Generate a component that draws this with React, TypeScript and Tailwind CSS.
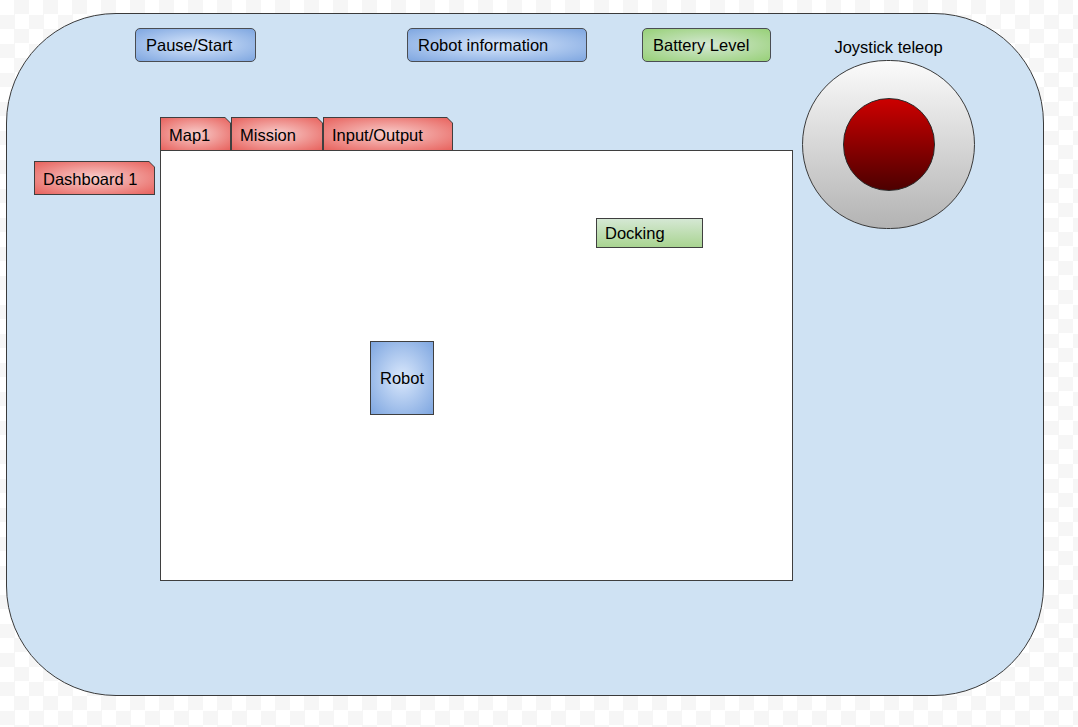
const font = { fontFamily: '"Liberation Sans", Arial, Helvetica, sans-serif' };

const tabClip =
  "[clip-path:polygon(0_0,calc(100%-6px)_0,100%_6px,100%_100%,0_100%)]";
const tabInnerClip =
  "[clip-path:polygon(0_0,calc(100%-5px)_0,100%_5px,100%_100%,0_100%)]";

function TopButton({ label, width, tone }: { label: string; width: string; tone: "blue" | "green" }) {
  const fill =
    tone === "blue"
      ? "bg-[radial-gradient(ellipse_at_center,#dae8fc_0%,#7ea6e0_100%)]"
      : "bg-[radial-gradient(ellipse_at_center,#d5e8d4_0%,#97d077_100%)]";
  return (
    <div
      className={`flex h-[34px] shrink-0 items-center rounded-[5px] border border-[#4a4d52] pl-[10px] text-[16.5px] text-black ${fill} ${width}`}
    >
      {label}
    </div>
  );
}

function Tab({ label, width, height, bottom = true }: { label: string; width: string; height: string; bottom?: boolean }) {
  return (
    <div className={`shrink-0 bg-[#3f3f3f] pt-px pl-px pr-px ${bottom ? "pb-px" : ""} ${tabClip} ${width} ${height}`}>
      <div
        className={`flex h-full items-center bg-[radial-gradient(ellipse_at_center,#f8cecc_0%,#e8625d_100%)] pl-[8px] pt-[2px] text-[16.5px] text-black ${tabInnerClip}`}
      >
        {label}
      </div>
    </div>
  );
}

export default function App() {
  return (
    <div
      className="h-[727px] w-[1078px] overflow-hidden bg-white bg-[conic-gradient(#f6f6f6_25%,#ffffff_0_50%,#f6f6f6_0_75%,#ffffff_0)] bg-[length:29px_29px] pt-[13px] pl-[6px]"
      style={font}
    >
      <div className="flex h-[683px] w-[1038px] rounded-[110px] border border-[#3a3a3a] bg-[#cfe2f3]">
        {/* left area */}
        <div className="w-[795px] shrink-0">
          <div className="mt-[14px] flex">
            <div className="ml-[128px]">
              <TopButton label="Pause/Start" width="w-[121px]" tone="blue" />
            </div>
            <div className="ml-[151px]">
              <TopButton label="Robot information" width="w-[180px]" tone="blue" />
            </div>
            <div className="ml-[55px]">
              <TopButton label="Battery Level" width="w-[129px]" tone="green" />
            </div>
          </div>

          <div className="mt-[55px] flex">
            <div className="ml-[27px] mt-[44px]">
              <Tab label="Dashboard 1" width="w-[121px]" height="h-[34px]" />
            </div>

            <div className="ml-[5px]">
              <div className="flex">
                <Tab label="Map1" width="w-[71px]" height="h-[33px]" bottom={false} />
                <Tab label="Mission" width="w-[92px]" height="h-[33px]" bottom={false} />
                <Tab label="Input/Output" width="w-[130px]" height="h-[33px]" bottom={false} />
              </div>
              <div className="relative h-[431px] w-[633px] border border-[#3f3f3f] bg-white">
                <div className="absolute left-[435px] top-[67px] flex h-[30px] w-[107px] items-center border border-[#3f3f3f] bg-[linear-gradient(to_bottom,#d5e8d4,#a9d491)] pl-[8px] text-[16.5px] text-black">
                  Docking
                </div>
                <div className="absolute left-[209px] top-[190px] flex h-[74px] w-[64px] items-center justify-center border border-[#3f3f3f] bg-[radial-gradient(ellipse_at_center,#dae8fc_0%,#7ea6e0_100%)] text-[16.5px] text-black">
                  Robot
                </div>
              </div>
            </div>
          </div>
        </div>

        {/* joystick */}
        <div className="flex w-[173px] shrink-0 flex-col items-center">
          <div className="mt-[24px] h-[18px] text-[16.5px] leading-[18px] text-black">Joystick teleop</div>
          <div className="mt-[4px] flex h-[169px] w-[173px] items-center justify-center rounded-full border border-[#3a3a3a] bg-[linear-gradient(to_bottom,#fbfbfb,#b3b3b3)]">
            <div className="h-[93px] w-[92px] rounded-full border border-[#2a2a2a] bg-[linear-gradient(to_bottom,#cc0000,#4d0000)]" />
          </div>
        </div>
      </div>
    </div>
  );
}
